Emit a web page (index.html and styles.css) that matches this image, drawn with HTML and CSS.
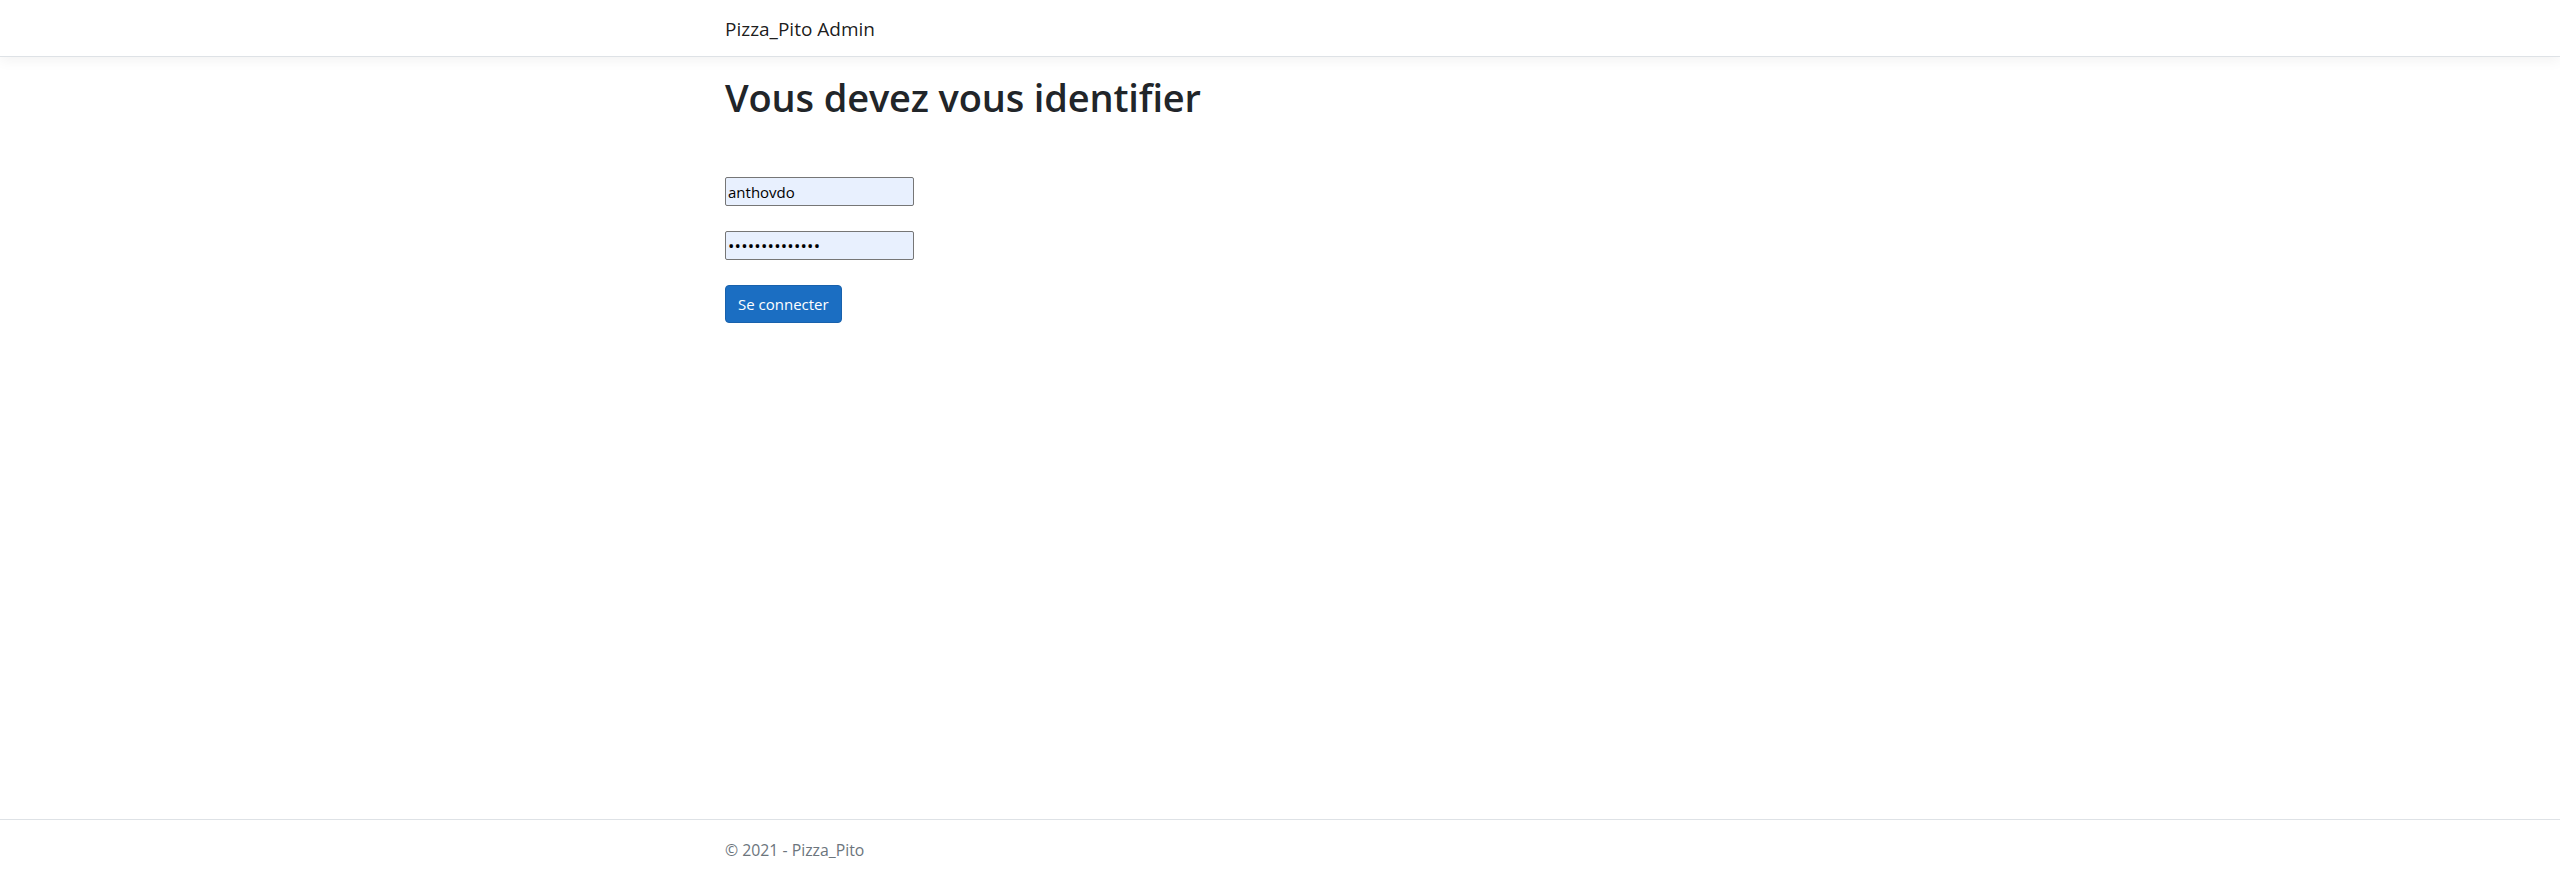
FILE: index.html
```html
<!DOCTYPE html>
<html lang="fr">
<head>
<meta charset="utf-8">
<title>Pizza_Pito Admin</title>
<link rel="stylesheet" href="styles.css">
</head>
<body>
<header class="site-header">
  <nav class="navbar">
    <div class="container">
      <a class="brand" href="#">Pizza_Pito Admin</a>
    </div>
  </nav>
</header>
<main class="container main">
  <h1 class="title">Vous devez vous identifier</h1>
  <form class="login-form">
    <input class="field" type="text" value="anthovdo">
    <input class="field field-password" type="password" value="abcdefghijklmn">
    <button class="btn-primary" type="button">Se connecter</button>
  </form>
</main>
<footer class="footer">
  <div class="container">© 2021 - Pizza_Pito</div>
</footer>
</body>
</html>
```
FILE: styles.css
```css
* { box-sizing: border-box; }
html, body { height: 100%; }
body {
  margin: 0;
  font-family: "Open Sans", "Noto Sans", "Liberation Sans", sans-serif;
  font-size: 16px;
  line-height: 1.5;
  color: #212529;
  background: #fff;
  display: flex;
  flex-direction: column;
  min-height: 100vh;
}
.container {
  width: 1140px;
  margin: 0 auto;
  padding: 0 15px;
}
.site-header { position: relative; z-index: 1; }
.navbar {
  height: 57px;
  background: #fff;
  border-bottom: 1px solid #dee2e6;
  box-shadow: 0 4px 12px rgba(0, 0, 0, 0.05);
  display: flex;
  align-items: center;
}
.brand {
  display: block;
  font-size: 19px;
  line-height: 30px;
  color: rgba(0, 0, 0, 0.9);
  text-decoration: none;
  padding-top: 1px;
}
.main { padding-top: 16px; flex: 1; }
.title {
  margin: 0 0 8px;
  font-size: 38px;
  font-weight: 600;
  letter-spacing: -0.15px;
  line-height: 48px;
}
.login-form {
  display: flex;
  flex-direction: column;
  align-items: flex-start;
  gap: 25px;
  padding-top: 48px;
}
.field {
  width: 189px;
  height: 29px;
  padding: 1px 2px;
  border: 1px solid #767676;
  border-radius: 2px;
  background: #e8f0fe;
  color: #000;
  font-family: inherit;
  font-size: 15px;
  line-height: 24px;
}
.field-password {
  font-size: 17px;
  letter-spacing: 0.2px;
}
.btn-primary {
  height: 38px;
  padding: 6px 12px;
  font-family: inherit;
  font-size: 15px;
  line-height: 24px;
  color: #fff;
  background: #1b6ec2;
  border: 1px solid #1861ac;
  border-radius: 4px;
}
.footer {
  border-top: 1px solid #dee2e6;
  line-height: 60px;
  color: #6c757d;
  font-size: 15.8px;
  white-space: nowrap;
}
```
